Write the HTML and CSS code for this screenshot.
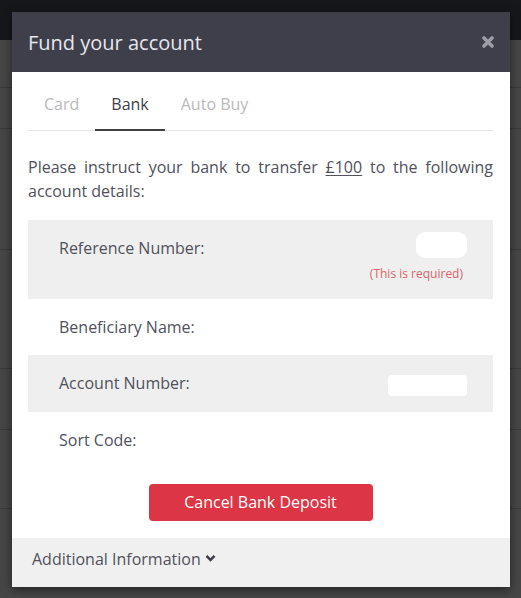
FILE: index.html
```html
<!DOCTYPE html>
<html lang="en">
<head>
    <meta charset="UTF-8">
    <meta name="viewport" content="width=device-width, initial-scale=1.0">
    <title>Fund your account</title>
    <link rel="stylesheet" href="styles.css">
</head>
<body>

    <!-- page behind the dimmed overlay -->
    <div class="backdrop">
        <div class="topbar"></div>
        <div class="page-row" style="height: 47px"></div>
        <div class="page-row" style="height: 40px"></div>
        <div class="page-row" style="height: 120px"></div>
        <div class="page-row" style="height: 118px"></div>
        <div class="page-row" style="height: 60px"></div>
        <div class="page-row" style="height: 78px"></div>
    </div>

    <div class="modal">
        <div class="modal-header">
            <h1>Fund your account</h1>
            <button class="close" aria-label="Close">
                <svg width="12" height="12" viewBox="0 0 12 12">
                    <path d="M2 2 L10 10 M10 2 L2 10" stroke="#9c9da6" stroke-width="3.6" stroke-linecap="round"/>
                </svg>
            </button>
        </div>

        <div class="modal-body">
            <ul class="tabs">
                <li><a href="#">Card</a></li>
                <li class="active"><a href="#">Bank</a></li>
                <li><a href="#">Auto Buy</a></li>
            </ul>

            <p class="intro">Please instruct your bank to transfer <span class="amount">£100</span> to the following account details:</p>

            <table class="details">
                <tr class="shaded">
                    <td>Reference Number:</td>
                    <td class="value">
                        <span class="hidden-value ref"></span>
                        <div class="required">(This is required)</div>
                    </td>
                </tr>
                <tr>
                    <td>Beneficiary Name:</td>
                    <td class="value"></td>
                </tr>
                <tr class="shaded">
                    <td>Account Number:</td>
                    <td class="value"><span class="hidden-value acc"></span></td>
                </tr>
                <tr>
                    <td>Sort Code:</td>
                    <td class="value"></td>
                </tr>
            </table>

            <div class="actions">
                <button class="btn-danger">Cancel Bank Deposit</button>
            </div>
        </div>

        <div class="modal-footer">
            Additional Information
            <svg class="chevron" width="11" height="8" viewBox="0 0 11 8">
                <path d="M1.5 1.8 L5.5 5.8 L9.5 1.8" fill="none" stroke="#3e3f4b" stroke-width="2.6"/>
            </svg>
        </div>
    </div>

</body>
</html>
```

FILE: styles.css
```css
body {
    margin: 0;
    padding: 0;
    font-family: "Open Sans", Arial, sans-serif;
    background-color: #464646;
    height: 598px;
    overflow: hidden;
}

.backdrop .topbar {
    height: 40px;
    background-color: #16171b;
}

.page-row {
    border-bottom: 1px solid #393939;
}

.modal {
    position: absolute;
    top: 12px;
    left: 12px;
    width: 498px;
    background-color: #fff;
    box-shadow: 0 3px 9px rgba(0, 0, 0, 0.5);
}

.modal-header {
    height: 60px;
    background-color: #3e3f4b;
    display: flex;
    align-items: center;
    justify-content: space-between;
    padding: 0 16px 0 16px;
}

.modal-header h1 {
    margin: 0;
    font-size: 20px;
    font-weight: 400;
    color: #e6e6ee;
}

.close {
    background: none;
    border: none;
    padding: 0;
    display: flex;
    cursor: pointer;
}

.modal-body {
    padding: 16px 17px 17px 16px;
}

.tabs {
    list-style: none;
    display: flex;
    margin: 0;
    padding: 0;
    border-bottom: 1px solid #e4e4e4;
}

.tabs li {
    margin-bottom: -1px;
}

.tabs li a {
    display: block;
    padding: 4px 16px 13px;
    line-height: 24px;
    font-size: 16px;
    color: #b9b9bc;
    text-decoration: none;
    border-bottom: 2px solid transparent;
}

.tabs li.active a {
    color: #3e3f4b;
    border-bottom-color: #3e3f4b;
}

.intro {
    margin: 24px 0 17px;
    font-size: 16px;
    line-height: 24px;
    color: #50515b;
    text-align: justify;
}

.amount {
    text-decoration: underline;
    text-underline-offset: 2px;
}

.details {
    width: 100%;
    border-collapse: collapse;
    font-size: 16px;
    line-height: 24px;
    color: #50515b;
}

.details td {
    padding: 16px 26px 16px 31px;
    vertical-align: top;
}

.details tr:first-child td {
    padding-bottom: 13px;
}

.details tr.shaded {
    background-color: #efefef;
}

.details td.value {
    text-align: right;
    padding-left: 0;
}

.hidden-value {
    display: inline-block;
    background-color: #fff;
    vertical-align: top;
}

.hidden-value.ref {
    width: 51px;
    height: 26px;
    margin-top: -4px;
    border-radius: 9px;
}

.hidden-value.acc {
    width: 79px;
    height: 21px;
    margin-top: 4px;
    border-radius: 4px;
}

.required {
    font-size: 12px;
    line-height: 24px;
    margin-top: 2px;
    color: #e0616b;
    margin-right: 4px;
}

.actions {
    display: flex;
    justify-content: center;
    margin-top: 16px;
}

.btn-danger {
    font-family: "Open Sans", Arial, sans-serif;
    font-size: 16px;
    line-height: 25px;
    padding: 6px 0;
    width: 224px;
    white-space: nowrap;
    color: #fff;
    background-color: #dc3545;
    border: none;
    border-radius: 4px;
    cursor: pointer;
}

.modal-footer {
    background-color: #f0f0f0;
    padding: 9px 20px 16px;
    font-size: 16px;
    line-height: 24px;
    color: #50515b;
    display: flex;
    align-items: center;
    gap: 4px;
}

.chevron {
    margin-top: -2px;
}
```
